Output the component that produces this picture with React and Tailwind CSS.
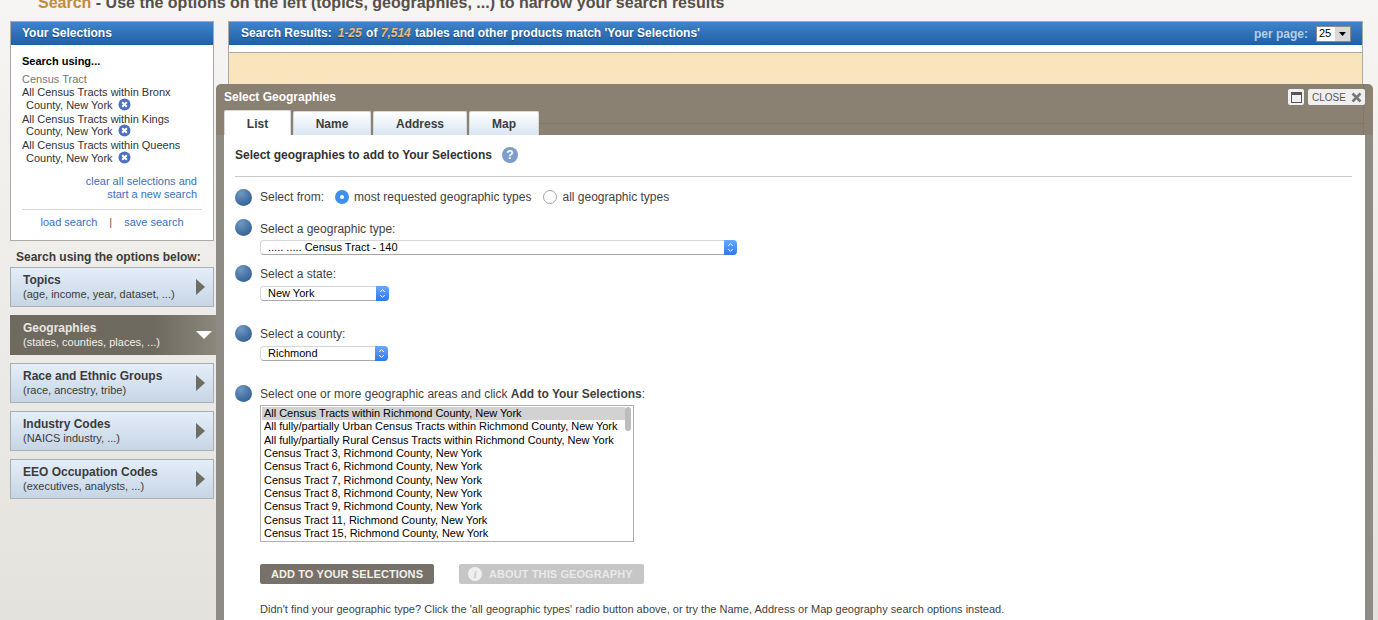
import React from 'react'

const selections = [
  ['All Census Tracts within Bronx', 'County, New York'],
  ['All Census Tracts within Kings', 'County, New York'],
  ['All Census Tracts within Queens', 'County, New York'],
]

const options = [
  { title: 'Topics', sub: '(age, income, year, dataset, ...)' },
  { title: 'Geographies', sub: '(states, counties, places, ...)', active: true },
  { title: 'Race and Ethnic Groups', sub: '(race, ancestry, tribe)' },
  { title: 'Industry Codes', sub: '(NAICS industry, ...)' },
  { title: 'EEO Occupation Codes', sub: '(executives, analysts, ...)' },
]

const tracts = [
  'All Census Tracts within Richmond County, New York',
  'All fully/partially Urban Census Tracts within Richmond County, New York',
  'All fully/partially Rural Census Tracts within Richmond County, New York',
  'Census Tract 3, Richmond County, New York',
  'Census Tract 6, Richmond County, New York',
  'Census Tract 7, Richmond County, New York',
  'Census Tract 8, Richmond County, New York',
  'Census Tract 9, Richmond County, New York',
  'Census Tract 11, Richmond County, New York',
  'Census Tract 15, Richmond County, New York',
]

function RemoveIcon() {
  return (
    <svg width="13" height="13" viewBox="0 0 13 13" className="ml-[5px] -my-[4px] inline-block align-[2px]">
      <circle cx="6.5" cy="6.5" r="6" fill="#4f6fc4" />
      <path d="M4.2 4.2l4.6 4.6M8.8 4.2l-4.6 4.6" stroke="#fff" strokeWidth="2" />
    </svg>
  )
}

function Bullet() {
  return <div className="w-[17px] h-[17px] shrink-0 rounded-full bg-[radial-gradient(circle_at_35%_25%,#6f97c2,#2f5d92_85%)]" />
}

function Dropdown({ width, label }) {
  return (
    <div className={`${width} h-[15px] flex items-center justify-between bg-white border border-[#d6d6d6] border-b-[#a8a8a8] rounded-[4px] text-[11px] text-black`}>
      <span className="pl-[7px] leading-none">{label}</span>
      <div className="w-[13px] h-[15px] -mr-px shrink-0 rounded-r-[4px] bg-gradient-to-b from-[#6aa8fb] to-[#2a78f0] flex items-center justify-center">
        <svg width="7" height="11" viewBox="0 0 7 11" fill="none" stroke="#fff" strokeWidth="1">
          <path d="M1.2 4L3.5 1.6 5.8 4M1.2 7l2.3 2.4L5.8 7" />
        </svg>
      </div>
    </div>
  )
}

function OptionCard({ title, sub, active }) {
  if (active) {
    return (
      <div className="h-[40px] -mr-[2px] pl-[13px] pr-[6px] flex items-center justify-between bg-gradient-to-r from-[#6f6a60] via-[#6f6a60] via-70% to-[#8c877d] text-white">
        <div>
          <div className="text-[12px] font-bold leading-[14px] text-[#e8e6e2]">{title}</div>
          <div className="text-[11px] leading-[14px] text-[#f0eeea]">{sub}</div>
        </div>
        <svg width="16" height="8" viewBox="0 0 16 8" className="mr-[-2px]"><path d="M0 0h16L8 8z" fill="#fff" /></svg>
      </div>
    )
  }
  return (
    <div className="h-[40px] pl-[12px] pr-[8px] flex items-center justify-between border border-[#a8aeb2] bg-gradient-to-b from-[#e4eef9] to-[#c6d5e4]">
      <div>
        <div className="text-[12px] font-bold leading-[14px] text-[#3b3b3b]">{title}</div>
        <div className="text-[11px] leading-[14px] text-[#3b3b3b]">{sub}</div>
      </div>
      <svg width="9" height="16" viewBox="0 0 9 16"><path d="M0 0l9 8-9 8z" fill="#6f6c64" /></svg>
    </div>
  )
}

function Tab({ label, active, width }) {
  return (
    <div
      className={`${width} pt-[1px] flex items-center justify-center text-[12px] font-bold text-[#3d3d3d] border-t border-x border-[#d9d9d9] rounded-t-[2px] ${
        active ? 'h-[25px] bg-white' : 'h-[24px] bg-gradient-to-b from-white to-[#d9e6f3]'
      }`}
    >
      {label}
    </div>
  )
}

function Sidebar() {
  return (
    <aside className="w-[204px] shrink-0">
      <div className="h-[220px] border border-[#a9a9a9] bg-white">
        <div className="h-[23px] pl-[11px] pb-[2px] flex items-center bg-gradient-to-b from-[#3f84cb] to-[#1f5fa6] text-[12px] font-bold text-white [text-shadow:0_1px_1px_rgba(0,0,0,0.35)]">
          Your Selections
        </div>
        <div className="px-[11px] pt-[10px] text-[11px] leading-[13px] text-[#333]">
          <div className="font-bold text-black">Search using...</div>
          <div className="mt-[5px] text-[#777]">Census Tract</div>
          {selections.map((s, i) => (
            <div key={i} className="leading-[12.5px] mb-[1.5px]">
              <div>{s[0]}</div>
              <div className="pl-[4px]">{s[1]}<RemoveIcon /></div>
            </div>
          ))}
          <div className="mt-[11px] pr-[5px] text-right text-[#3b6fc0]">
            <div>clear all selections and</div>
            <div>start a new search</div>
          </div>
          <div className="mt-[8px] pt-[6px] border-t border-[#d8d8d8] text-center text-[#3b6fc0]">
            load search<span className="mx-[12px] text-[#555]">|</span>save search
          </div>
        </div>
      </div>
      <div className="mt-[9px] pl-[6px] text-[12px] font-bold leading-[14px] text-[#3b3b3b]">
        Search using the options below:
      </div>
      <div className="mt-[3px] flex flex-col gap-[8px]">
        {options.map((o) => (
          <OptionCard key={o.title} {...o} />
        ))}
      </div>
    </aside>
  )
}

function Results() {
  return (
    <section className="flex-1 min-w-0">
      <div className="border border-[#a9a9a9] border-b-0">
        <div className="h-[23px] pl-[12px] pr-[11px] flex items-center justify-between bg-gradient-to-b from-[#3f84cb] to-[#1f5fa6] text-[12px] font-bold text-white">
          <div className="pb-[2px] [text-shadow:0_1px_1px_rgba(0,0,0,0.35)]">
            Search Results:<span className="ml-[6px] italic text-[#eabd78]">1-25</span><span className="ml-[1px]"> of </span>
            <span className="italic text-[#eabd78]">7,514</span><span className="ml-[1px]"> tables and other products match 'Your Selections'</span>
          </div>
          <div className="flex items-center gap-[8px]">
            <span className="text-[#b4cfe8]">per page:</span>
            <div className="w-[35px] h-[16px] flex items-center justify-between bg-white border border-[#8b8b8b] text-[11px] font-normal text-black">
              <span className="pl-[2px]">25</span>
              <div className="w-[15px] h-full bg-[#d8d8d8] flex items-center justify-center">
                <svg width="7" height="4" viewBox="0 0 7 4"><path d="M0 0h7L3.5 4z" fill="#000" /></svg>
              </div>
            </div>
          </div>
        </div>
        <div className="h-[7px] bg-white" />
      </div>
      <div className="h-[200px] border-x border-t border-[#a9a9a9] bg-[#f9e5bd]" />
    </section>
  )
}

function GeographyModal() {
  return (
    <div className="absolute left-[216px] top-[84px] w-[1157px] h-[536px] px-[8px] rounded-t-[5px] bg-[linear-gradient(#8a8173_51px,#8e8b85_51px)] flex flex-col">
      <div className="absolute right-[9px] top-0 h-[51px] w-px bg-[#7d776d]" />
      <div className="relative h-[26px] shrink-0 flex items-center justify-between">
        <div className="text-[12px] font-bold text-white">Select Geographies</div>
        <div className="flex items-center gap-[4px]">
          <div className="w-[16px] h-[16px] flex items-center justify-center bg-[#f1f1f1] rounded-[2px]">
            <div className="w-[11px] h-[11px] border border-[#555] border-t-[3px]" />
          </div>
          <div className="w-[57px] h-[16px] pl-[4px] pr-[3px] flex items-center justify-between bg-[#efefef] rounded-[2px] text-[10px] text-[#555]">
            CLOSE
            <svg width="11" height="11" viewBox="0 0 11 11"><path d="M1.5 1.5l8 8M9.5 1.5l-8 8" stroke="#777" strokeWidth="2.6" /></svg>
          </div>
        </div>
      </div>
      <div className="relative h-[25px] shrink-0 flex items-end gap-[2px]">
        <Tab label="List" active width="w-[67px]" />
        <Tab label="Name" width="w-[78px]" />
        <Tab label="Address" width="w-[94px]" />
        <Tab label="Map" width="w-[70px]" />
        <div className="flex-1 -ml-[2px] mb-[11px] border-b border-[#7d776d]" />
      </div>
      <div className="flex-1 bg-white pl-[11px] pr-[13px] text-[12px] text-[#3f3f3f]">
        <div className="h-[41px] pb-[2px] flex items-center font-bold text-[#333]">
          Select geographies to add to Your Selections
          <div className="ml-[10px] w-[16px] h-[16px] rounded-full bg-[#7c9dc9] text-white text-[12px] font-bold flex items-center justify-center">?</div>
        </div>
        <div className="border-t border-[#c9c9c9]" />

        <div className="mt-[11px] h-[18px] flex items-center">
          <Bullet />
          <span className="ml-[8px]">Select from:</span>
          <span className="ml-[11px] w-[14px] h-[14px] rounded-full bg-[#3f8ef0] flex items-center justify-center">
            <span className="w-[4px] h-[4px] rounded-full bg-white" />
          </span>
          <span className="ml-[5px]">most requested geographic types</span>
          <span className="ml-[12px] w-[14px] h-[14px] rounded-full bg-white border border-[#a5a5a5]" />
          <span className="ml-[5px]">all geographic types</span>
        </div>

        <div className="mt-[13px] flex items-start">
          <Bullet />
          <div className="ml-[8px]">
            <div className="leading-[14px] mt-[3px]">Select a geographic type:</div>
            <div className="mt-[4px]"><Dropdown width="w-[477px]" label="..... ..... Census Tract - 140" /></div>
          </div>
        </div>
        <div className="mt-[10px] flex items-start">
          <Bullet />
          <div className="ml-[8px]">
            <div className="leading-[14px] mt-[2px]">Select a state:</div>
            <div className="mt-[5px]"><Dropdown width="w-[129px]" label="New York" /></div>
          </div>
        </div>
        <div className="mt-[24px] flex items-start">
          <Bullet />
          <div className="ml-[8px]">
            <div className="leading-[14px] mt-[2px]">Select a county:</div>
            <div className="mt-[5px]"><Dropdown width="w-[128px]" label="Richmond" /></div>
          </div>
        </div>
        <div className="mt-[24px] flex items-start">
          <Bullet />
          <div className="ml-[8px]">
            <div className="leading-[14px] mt-[2px]">Select one or more geographic areas and click <b>Add to Your Selections</b>:</div>
            <div className="relative mt-[4px] w-[374px] h-[137px] border border-[#b0b0b0] pt-[1px] pl-[1px] text-[11px] leading-[13.33px] tracking-[-0.03px] text-black">
              {tracts.map((t, i) => (
                <div key={t} className={`pl-[2px] mr-[8px] ${i === 0 ? 'bg-[#d2d2d2]' : ''}`}>{t}</div>
              ))}
              <div className="absolute right-[2px] top-[1px] w-[6px] h-[24px] rounded-full bg-[#bdbdbd]" />
            </div>
            <div className="mt-[22px] flex gap-[25px]">
              <div className="w-[174px] h-[20px] flex items-center justify-center rounded-[2px] bg-[#77716a] text-[11px] tracking-[0.1px] font-bold text-[#f2f0ec]">ADD TO YOUR SELECTIONS</div>
              <div className="w-[185px] h-[20px] pl-[9px] flex items-center gap-[7px] rounded-[2px] bg-[#c6c6c6] text-[11px] tracking-[0.1px] font-bold text-[#e9e9e9]">
                <span className="w-[14px] h-[14px] rounded-full bg-[#efefef] text-[#c6c6c6] text-[11px] italic font-bold flex items-center justify-center" style={{ fontFamily: '"Liberation Serif", serif' }}>i</span>
                ABOUT THIS GEOGRAPHY
              </div>
            </div>
            <div className="mt-[18px] text-[11px] leading-[14px] tracking-[0.02px] text-[#3f3f3f]">
              Didn't find your geographic type? Click the 'all geographic types' radio button above, or try the Name, Address or Map geography search options instead.
            </div>
          </div>
        </div>
      </div>
    </div>
  )
}

export default function App() {
  return (
    <div
      className="relative w-[1378px] h-[620px] overflow-hidden bg-gradient-to-b from-[#f6f5f3] to-[#e4e2dd]"
      style={{ fontFamily: '"Liberation Sans", Arial, sans-serif' }}
    >
      <div className="h-[21px] pl-[38px] flex items-end overflow-hidden">
        <div className="mb-[9px] shrink-0 text-[16px] font-bold leading-[18px] whitespace-nowrap text-[#55504a]">
          <span className="text-[#c08c3e]">Search</span> - Use the options on the left (topics, geographies, ...) to narrow your search results
        </div>
      </div>
      <div className="flex gap-[14px] pl-[10px] pr-[15px]">
        <Sidebar />
        <Results />
      </div>
      <GeographyModal />
    </div>
  )
}
